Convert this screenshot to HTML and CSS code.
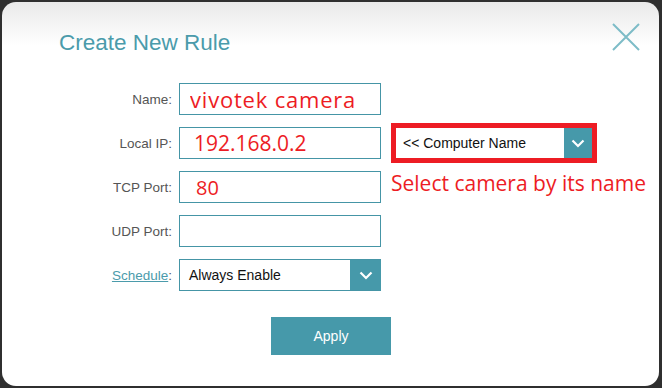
FILE: index.html
```html
<!DOCTYPE html>
<html lang="en">
<head>
  <meta charset="UTF-8">
  <title>Create New Rule</title>
  <link rel="stylesheet" href="styles.css">
</head>
<body>

  <!-- Dialog -->
  <div class="dialog">

    <div class="dialog-header">
      <h1>Create New Rule</h1>
      <a href="#" class="close-button" title="Close">
        <svg width="28" height="28" viewBox="0 0 28 28">
          <path d="M1 1 L27 27 M27 1 L1 27" stroke="#7dbcc7" stroke-width="2" fill="none"/>
        </svg>
      </a>
    </div>

    <!-- Rule form -->
    <div class="rule-form">

      <div class="form-row">
        <label class="form-label">Name:</label>
        <input type="text" class="text-field note-text note-name" value="vivotek camera">
      </div>

      <div class="form-row">
        <label class="form-label">Local IP:</label>
        <input type="text" class="text-field note-text note-ip" value="192.168.0.2">
        <div class="note-box">
          <div class="select-box select-wide">
            <span class="select-value">&lt;&lt; Computer Name</span>
            <span class="select-arrow">
              <svg width="14" height="9" viewBox="0 0 14 9"><path d="M1.5 1.5 L7 7 L12.5 1.5" stroke="#fff" stroke-width="2.2" fill="none"/></svg>
            </span>
          </div>
        </div>
      </div>

      <div class="form-row">
        <label class="form-label">TCP Port:</label>
        <input type="text" class="text-field note-text note-port" value="80">
        <span class="note-caption">Select camera by its name</span>
      </div>

      <div class="form-row">
        <label class="form-label">UDP Port:</label>
        <input type="text" class="text-field" value="">
      </div>

      <div class="form-row">
        <label class="form-label"><a href="#" class="schedule-link">Schedule</a>:</label>
        <div class="select-box select-field">
          <span class="select-value">Always Enable</span>
          <span class="select-arrow">
            <svg width="14" height="9" viewBox="0 0 14 9"><path d="M1.5 1.5 L7 7 L12.5 1.5" stroke="#fff" stroke-width="2.2" fill="none"/></svg>
          </span>
        </div>
      </div>

    </div>

    <div class="form-actions">
      <button class="apply-button">Apply</button>
    </div>

  </div>

</body>
</html>
```

FILE: styles.css
```css
/* Page behind the dialog */
body {
  margin: 0;
  padding: 0;
  background-color: #2f2f2f;
  font-family: Arial, 'Liberation Sans', sans-serif;
  height: 388px;
  overflow: hidden;
}

/* Dialog box */
.dialog {
  margin: 2px 0 0 2px;
  width: 657px;
  height: 384px;
  box-sizing: border-box;
  background: linear-gradient(to bottom, #e9e9e9 0px, #ffffff 44px, #ffffff 100%);
  border-radius: 14px;
}

.dialog-header {
  display: flex;
  justify-content: space-between;
  align-items: flex-start;
  padding: 21px 19px 0 57px;
}

.dialog-header h1 {
  margin: 7px 0 0 0;
  font-size: 22.5px;
  line-height: 26px;
  font-weight: normal;
  color: #4b9bab;
}

.close-button {
  display: block;
  width: 28px;
  height: 28px;
}

/* Form rows */
.rule-form {
  display: flex;
  flex-direction: column;
  gap: 12px;
  margin-top: 27px;
}

.form-row {
  display: flex;
  align-items: center;
  height: 32px;
}

.form-label {
  width: 170px;
  margin-right: 7px;
  text-align: right;
  font-size: 13.5px;
  color: #555;
}

.schedule-link {
  color: #4b9bab;
  text-decoration: underline;
}

.text-field {
  width: 202px;
  height: 32px;
  box-sizing: border-box;
  border: 1px solid #4595a6;
  padding: 0 10px;
  margin: 0;
  font-family: Arial, 'Liberation Sans', sans-serif;
  font-size: 14px;
  outline: none;
  background: #fff;
}

/* Red notes added on top of the screenshot */
.note-text {
  font-family: 'Open Sans', sans-serif;
  color: #ed1c24;
}

.note-name {
  font-size: 22px;
  letter-spacing: 0.8px;
}

.note-ip {
  padding-left: 14px;
  font-size: 21px;
}

.note-port {
  padding-left: 16px;
  font-size: 20px;
}

.note-box {
  margin-left: 10px;
  border: 5px solid #ed1c24;
}

.note-caption {
  margin-left: 10px;
  margin-top: -8px;
  font-family: 'Open Sans', sans-serif;
  font-size: 21px;
  color: #ed1c24;
  white-space: nowrap;
}

/* Drop-down lists */
.select-box {
  display: flex;
  align-items: stretch;
  box-sizing: border-box;
  background: #fff;
}

.select-field {
  width: 202px;
  height: 32px;
  border: 1px solid #4595a6;
  border-right: none;
}

.select-wide {
  width: 196px;
  height: 30px;
}

.select-value {
  flex: 1;
  display: flex;
  align-items: center;
  padding-left: 9px;
  font-size: 14px;
  color: #111;
}

.select-wide .select-value {
  padding-left: 7px;
  font-size: 14px;
}

.select-arrow {
  display: flex;
  align-items: center;
  justify-content: center;
  width: 31px;
  background-color: #4699aa;
}

.select-wide .select-arrow {
  width: 28px;
}

/* Apply button */
.form-actions {
  display: flex;
  padding-left: 269px;
  margin-top: 26px;
}

.apply-button {
  width: 120px;
  height: 38px;
  border: none;
  background-color: #4699aa;
  color: #fff;
  font-family: Arial, 'Liberation Sans', sans-serif;
  font-size: 14px;
  cursor: pointer;
}
```
